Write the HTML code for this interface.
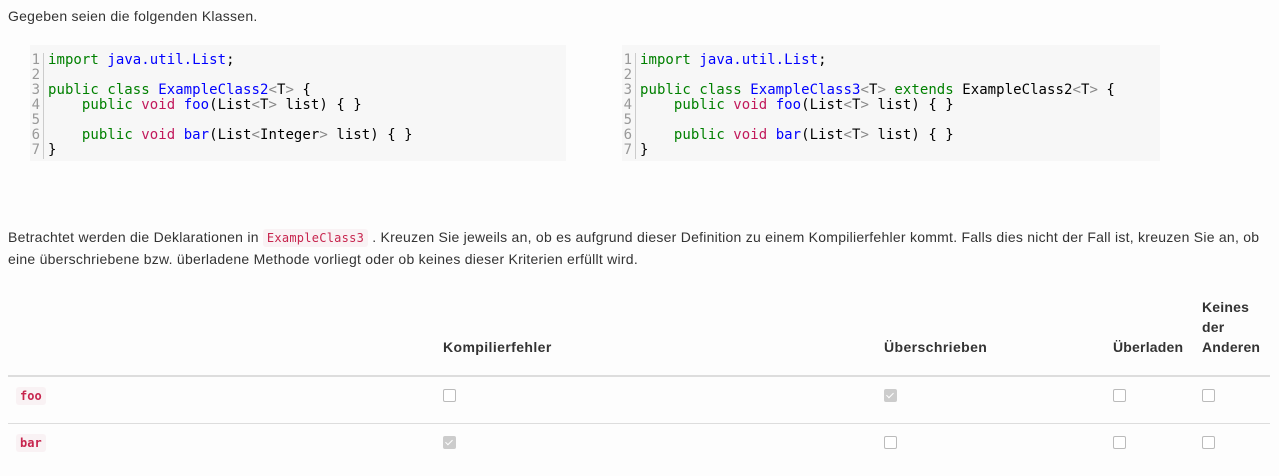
<!DOCTYPE html>
<html><head><meta charset="utf-8"><style>
body{margin:0;width:1279px;height:476px;background:#fdfdfd;font-family:"Liberation Sans",sans-serif;font-size:14px;color:#333;position:relative;overflow:hidden}
.a{position:absolute;white-space:nowrap}
.code{position:absolute;top:45px;height:116px;background:#f7f7f7;font-family:"DejaVu Sans Mono",monospace;font-size:14px;line-height:15px}
.gut{position:absolute;left:0;top:8px;width:10px;text-align:right;color:#999;border-right:1px solid #ccc;padding-right:3px;height:106px}
.src{position:absolute;left:18px;top:8px;white-space:pre;color:#000;letter-spacing:0.05px}
.k{color:#008000}.t{color:#0000ff}.v{color:#c2185b}.g{color:#888}
code{font-family:"DejaVu Sans Mono",monospace;font-size:12px;color:#c7254e;background:#f9f2f4;padding:2px 4px;border-radius:3px}
.cb{position:absolute;width:11px;height:11px;border:1px solid #bbb;border-radius:2px;background:#fff}
.cb.c{background:#ccc;border-color:#ccc}
.cb.c:after{content:"";position:absolute;left:3px;top:1px;width:3px;height:6px;border:solid #fff;border-width:0 1.5px 1.5px 0;transform:rotate(45deg)}
.h{position:absolute;font-weight:bold;line-height:20px;letter-spacing:0.4px;color:#333}
</style></head><body>
<div class="a" style="left:8px;top:8px;letter-spacing:0.25px">Gegeben seien die folgenden Klassen.</div>

<div class="code" style="left:30px;width:536px">
<div class="gut" style="left:0">1<br>2<br>3<br>4<br>5<br>6<br>7</div>
<div class="src"><span class="k">import</span> <span class="t">java.util.List</span>;

<span class="k">public class</span> <span class="t">ExampleClass2</span><span class="g">&lt;</span>T<span class="g">&gt;</span> {
    <span class="k">public</span> <span class="v">void</span> <span class="t">foo</span>(List<span class="g">&lt;</span>T<span class="g">&gt;</span> list) { }

    <span class="k">public</span> <span class="v">void</span> <span class="t">bar</span>(List<span class="g">&lt;</span>Integer<span class="g">&gt;</span> list) { }
}</div></div>

<div class="code" style="left:622px;width:538px">
<div class="gut">1<br>2<br>3<br>4<br>5<br>6<br>7</div>
<div class="src"><span class="k">import</span> <span class="t">java.util.List</span>;

<span class="k">public class</span> <span class="t">ExampleClass3</span><span class="g">&lt;</span>T<span class="g">&gt;</span> <span class="k">extends</span> ExampleClass2<span class="g">&lt;</span>T<span class="g">&gt;</span> {
    <span class="k">public</span> <span class="v">void</span> <span class="t">foo</span>(List<span class="g">&lt;</span>T<span class="g">&gt;</span> list) { }

    <span class="k">public</span> <span class="v">void</span> <span class="t">bar</span>(List<span class="g">&lt;</span>T<span class="g">&gt;</span> list) { }
}</div></div>

<div class="a" style="left:8px;top:229px;letter-spacing:0.25px">Betrachtet werden die Deklarationen in <code>ExampleClass3</code> . Kreuzen Sie jeweils an, ob es aufgrund dieser Definition zu einem Kompilierfehler kommt. Falls dies nicht der Fall ist, kreuzen Sie an, ob</div>
<div class="a" style="left:8px;top:251px;letter-spacing:0.25px">eine überschriebene bzw. überladene Methode vorliegt oder ob keines dieser Kriterien erfüllt wird.</div>

<div class="h" style="left:443px;top:337px">Kompilierfehler</div>
<div class="h" style="left:884px;top:337px">Überschrieben</div>
<div class="h" style="left:1113px;top:337px;letter-spacing:0.2px">Überladen</div>
<div class="h" style="left:1202px;top:297px;letter-spacing:0.2px">Keines<br>der<br>Anderen</div>
<div class="a" style="left:8px;top:375px;width:1262px;height:2px;background:#ddd"></div>
<div class="a" style="left:8px;top:423px;width:1262px;height:1px;background:#ddd"></div>

<div class="a" style="left:16px;top:387px"><code style="font-weight:bold">foo</code></div>
<div class="a" style="left:16px;top:434px"><code style="font-weight:bold">bar</code></div>

<div class="cb" style="left:443px;top:389px"></div>
<div class="cb c" style="left:884px;top:389px"></div>
<div class="cb" style="left:1113px;top:389px"></div>
<div class="cb" style="left:1202px;top:389px"></div>
<div class="cb c" style="left:443px;top:436px"></div>
<div class="cb" style="left:884px;top:436px"></div>
<div class="cb" style="left:1113px;top:436px"></div>
<div class="cb" style="left:1202px;top:436px"></div>
</body></html>
